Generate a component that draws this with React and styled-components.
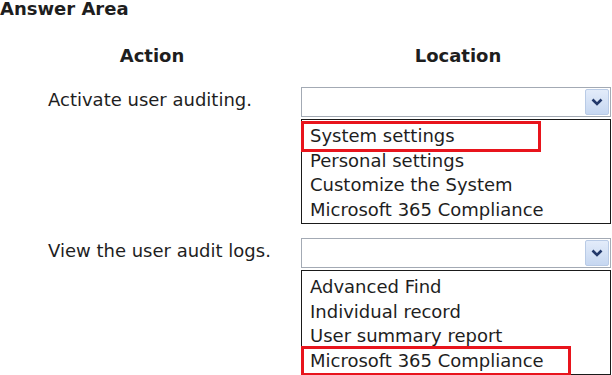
import React from "react";
import styled, { createGlobalStyle } from "styled-components";

const GlobalStyle = createGlobalStyle`
  html, body {
    margin: 0;
    padding: 0;
    background: #fff;
    overflow: hidden;
  }
  body {
    font-family: "DejaVu Sans", Verdana, sans-serif;
    font-size: 18px;
    color: #1e1e1e;
  }
`;

const Page = styled.div`
  width: 612px;
  height: 375px;
  overflow: hidden;
`;

const Title = styled.div`
  font-weight: bold;
  line-height: 17px;
`;

const Grid = styled.div`
  display: grid;
  grid-template-columns: 304px 308px;
`;

const Heading = styled.div`
  font-weight: bold;
  line-height: 18px;
  text-align: center;
  margin-top: 30px;
  margin-bottom: 22px;
`;

const Label = styled.div`
  height: 26px;
  display: flex;
  align-items: center;
  padding-left: 48px;
  line-height: 18px;
  white-space: nowrap;
`;

const Column = styled.div`
  display: flex;
  flex-direction: column;
  gap: 2px;
  margin-left: -3px;
  width: 310px;
  margin-bottom: ${(p) => p.$after || 0}px;
`;

const Select = styled.div`
  box-sizing: border-box;
  height: 30px;
  border: 1px solid #a3aab4;
  display: flex;
  justify-content: flex-end;
  align-items: center;
  padding-right: 1px;
`;

const Arrow = styled.div`
  box-sizing: border-box;
  width: 24px;
  height: 26px;
  border: 1px solid #b9cbe6;
  border-radius: 2px;
  background: linear-gradient(#e3ecfa, #c6d7f1);
  display: flex;
  align-items: center;
  justify-content: center;
  color: #22386a;
`;

const List = styled.div`
  box-sizing: border-box;
  height: 105px;
  border: 1px solid #1a1a1a;
  padding-top: 4px;
`;

const Option = styled.div`
  line-height: 24.5px;
  height: 24.5px;
  padding-left: 6px;
  margin-left: 2px;
  width: ${(p) => (p.$width ? `${p.$width}px` : "auto")};
  box-sizing: border-box;
  white-space: nowrap;
  outline: ${(p) => (p.$marked ? "3px solid #e8141c" : "none")};
`;

const Chevron = () => (
  <svg width="12" height="8" viewBox="0 0 12 8">
    <path d="M1.5 1.5 L6 6 L10.5 1.5" fill="none" stroke="currentColor" strokeWidth="2.6" />
  </svg>
);

const rows = [
  {
    label: "Activate user auditing.",
    options: ["System settings", "Personal settings", "Customize the System", "Microsoft 365 Compliance"],
    marked: 0,
    width: 234,
    after: 14,
  },
  {
    label: "View the user audit logs.",
    options: ["Advanced Find", "Individual record", "User summary report", "Microsoft 365 Compliance"],
    marked: 3,
    width: 264,
    after: 0,
  },
];

export default function App() {
  return (
    <Page>
      <GlobalStyle />
      <Title>Answer Area</Title>
      <Grid>
        <Heading>Action</Heading>
        <Heading>Location</Heading>
        {rows.map((r) => (
          <React.Fragment key={r.label}>
            <Label>{r.label}</Label>
            <Column $after={r.after}>
              <Select>
                <Arrow>
                  <Chevron />
                </Arrow>
              </Select>
              <List>
                {r.options.map((o, i) => (
                  <Option key={o} $marked={i === r.marked} $width={i === r.marked ? r.width : 0}>
                    {o}
                  </Option>
                ))}
              </List>
            </Column>
          </React.Fragment>
        ))}
      </Grid>
    </Page>
  );
}
